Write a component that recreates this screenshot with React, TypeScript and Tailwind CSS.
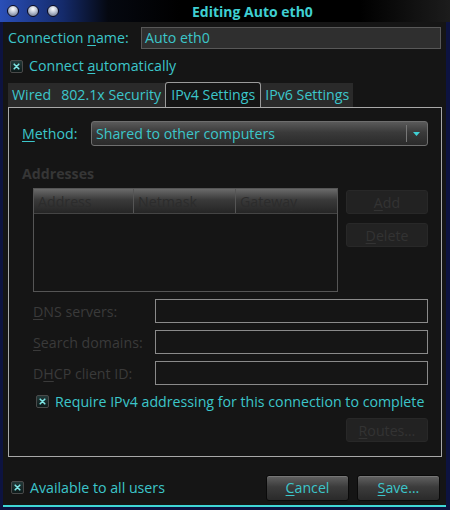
import React from 'react';

const font = { fontFamily: '"Open Sans", "DejaVu Sans", sans-serif' };

// mnemonic letter, GTK style underline
const U = ({ children }: { children: React.ReactNode }) => <span className="underline underline-offset-2">{children}</span>;

const Check = () => (
  <div className="w-[13px] h-[13px] shrink-0 rounded-[2px] border border-[#4a4a4a] bg-[linear-gradient(#223838,#0e1a1a)] flex items-center justify-center">
    <svg width="7" height="7" viewBox="0 0 7 7">
      <path d="M1.2 1.2L5.8 5.8M5.8 1.2L1.2 5.8" stroke="#7fe6e6" strokeWidth="1.6" strokeLinecap="round" />
    </svg>
  </div>
);

const DimButton = ({ children, className = '' }: { children: React.ReactNode; className?: string }) => (
  <div className={`w-[82px] h-[24px] rounded-[3px] bg-[#222] border border-[#282828] flex items-center justify-center text-[#333] ${className}`}>
    {children}
  </div>
);

const Field = ({ label }: { label: React.ReactNode }) => (
  <div className="flex items-center h-[24px]">
    <div className="w-[122px] text-[#3a3a3a]">{label}</div>
    <div className="flex-1 h-[24px] border border-[#8a8a8a] bg-[#151515]" />
  </div>
);

export default function App() {
  return (
    <div style={font} className="w-[450px] h-[510px] bg-[#0d1340] pl-[3px] pr-[4px] pb-[3px] text-[14.2px] text-[#3cc6ca]">
      <div className="h-full flex flex-col bg-[#151515] border-b-2 border-[#3fd6d6]">
        {/* Title bar */}
        <div className="h-[22px] shrink-0 flex items-center -ml-[3px] -mr-[4px] bg-[linear-gradient(90deg,#2a4fb8_0%,#142a6a_14%,#050810_24%,#000_40%,#000_80%,#1c1c1c_100%)]">
          <div className="flex gap-[8px] pl-[7px] w-[150px]">
            {[0, 1, 2].map((i) => (
              <div key={i} className="w-[12px] h-[12px] rounded-full border border-[#0a0a20] bg-[radial-gradient(circle_at_50%_30%,#ffffff_0%,#b8c0d0_45%,#5a6680_100%)]" />
            ))}
          </div>
          <div className="ml-[42px] font-bold text-[14px] text-[#3fcfd2]">Editing Auto eth0</div>
        </div>

        <div className="flex-1 flex flex-col px-[5px]">
          {/* Connection name */}
          <div className="mt-[5px] flex items-center h-[22px]">
            <div className="w-[133px]">Connection <U>n</U>ame:</div>
            <div className="w-[300px] h-[22px] bg-[#2f2f2f] border border-[#585858] px-[3px] flex items-center">Auto eth0</div>
          </div>

          {/* Connect automatically */}
          <div className="mt-[5px] flex items-center gap-[6px] h-[24px] pl-[2px]">
            <Check />
            <span>Connect <U>a</U>utomatically</span>
          </div>

          {/* Tabs */}
          <div className="mt-[4px] flex items-end h-[25px]">
            <div className="h-[24px] flex items-center gap-[10px] pl-[4px] pr-[4px] bg-[#2a2a2a]">
              <span>Wired</span>
              <span>802.1x Security</span>
            </div>
            <div className="h-[25px] flex items-center px-[5px] rounded-t-[3px] border border-b-0 border-[#9a9a9a] bg-[#151515]">IPv4 Settings</div>
            <div className="h-[24px] flex items-center px-[4px] bg-[#2a2a2a]">IPv6 Settings</div>
          </div>

          {/* Panel */}
          <div className="h-[350px] w-[434px] border border-[#a8a8a8] flex flex-col px-[13px]">
            <div className="mt-[13px] flex items-center h-[25px]">
              <div className="w-[69px]"><U>M</U>ethod:</div>
              <div className="flex-1 h-[25px] rounded-[3px] border border-[#6e6e6e] bg-[linear-gradient(#5a5a5a,#3a3a3a_45%,#2a2a2a)] flex items-center pl-[4px]">
                <span className="flex-1">Shared to other computers</span>
                <div className="w-px h-[17px] bg-[#777]" />
                <svg width="20" height="10" viewBox="0 0 20 10">
                  <path d="M6 3H13L9.5 7Z" fill="#3fd0d4" />
                </svg>
              </div>
            </div>

            <div className="mt-[17px] font-bold text-[#363636]">Addresses</div>

            <div className="mt-[4px] flex gap-[8px] pl-[11px]">
              <div className="w-[306px] h-[104px] border border-[#555] bg-[#151515] flex flex-col">
                <div className="h-[25px] flex border-b border-[#444] bg-[linear-gradient(#6a6a6a,#3a3a3a_45%,#252525)] text-[#2c2c2c]">
                  <div className="w-[100px] border-r border-[#555] px-[4px] flex items-center">Address</div>
                  <div className="w-[102px] border-r border-[#555] px-[4px] flex items-center">Netmask</div>
                  <div className="flex-1 px-[4px] flex items-center">Gateway</div>
                </div>
              </div>
              <div className="flex flex-col gap-[9px] pt-[2px]">
                <DimButton><U>A</U>dd</DimButton>
                <DimButton><U>D</U>elete</DimButton>
              </div>
            </div>

            <div className="mt-[7px] flex flex-col gap-[7px] pl-[11px]">
              <Field label={<><U>D</U>NS servers:</>} />
              <Field label={<><U>S</U>earch domains:</>} />
              <Field label={<>D<U>H</U>CP client ID:</>} />
            </div>

            <div className="mt-[7px] flex items-center gap-[6px] pl-[14px] h-[18px]">
              <Check />
              <span>Require IPv4 addressing for this connection to complete</span>
            </div>

            <div className="mt-[8px] flex justify-end">
              <DimButton><U>R</U>outes…</DimButton>
            </div>
          </div>

          {/* Bottom row */}
          <div className="flex-1 flex items-center pt-[13px]">
            <div className="flex items-center gap-[6px] pl-[3px] flex-1">
              <Check />
              <span>Available to all users</span>
            </div>
            <div className="flex gap-[8px] pr-[1px]">
              {[<><U>C</U>ancel</>, <><U>S</U>ave…</>].map((t, i) => (
                <div key={i} className="w-[83px] h-[26px] rounded-[3px] border border-[#0a0a0a] bg-[linear-gradient(#626262,#3c3c3c_45%,#2a2a2a)] flex items-center justify-center shadow-[inset_0_1px_0_#777]">
                  {t}
                </div>
              ))}
            </div>
          </div>
        </div>
      </div>
    </div>
  );
}
